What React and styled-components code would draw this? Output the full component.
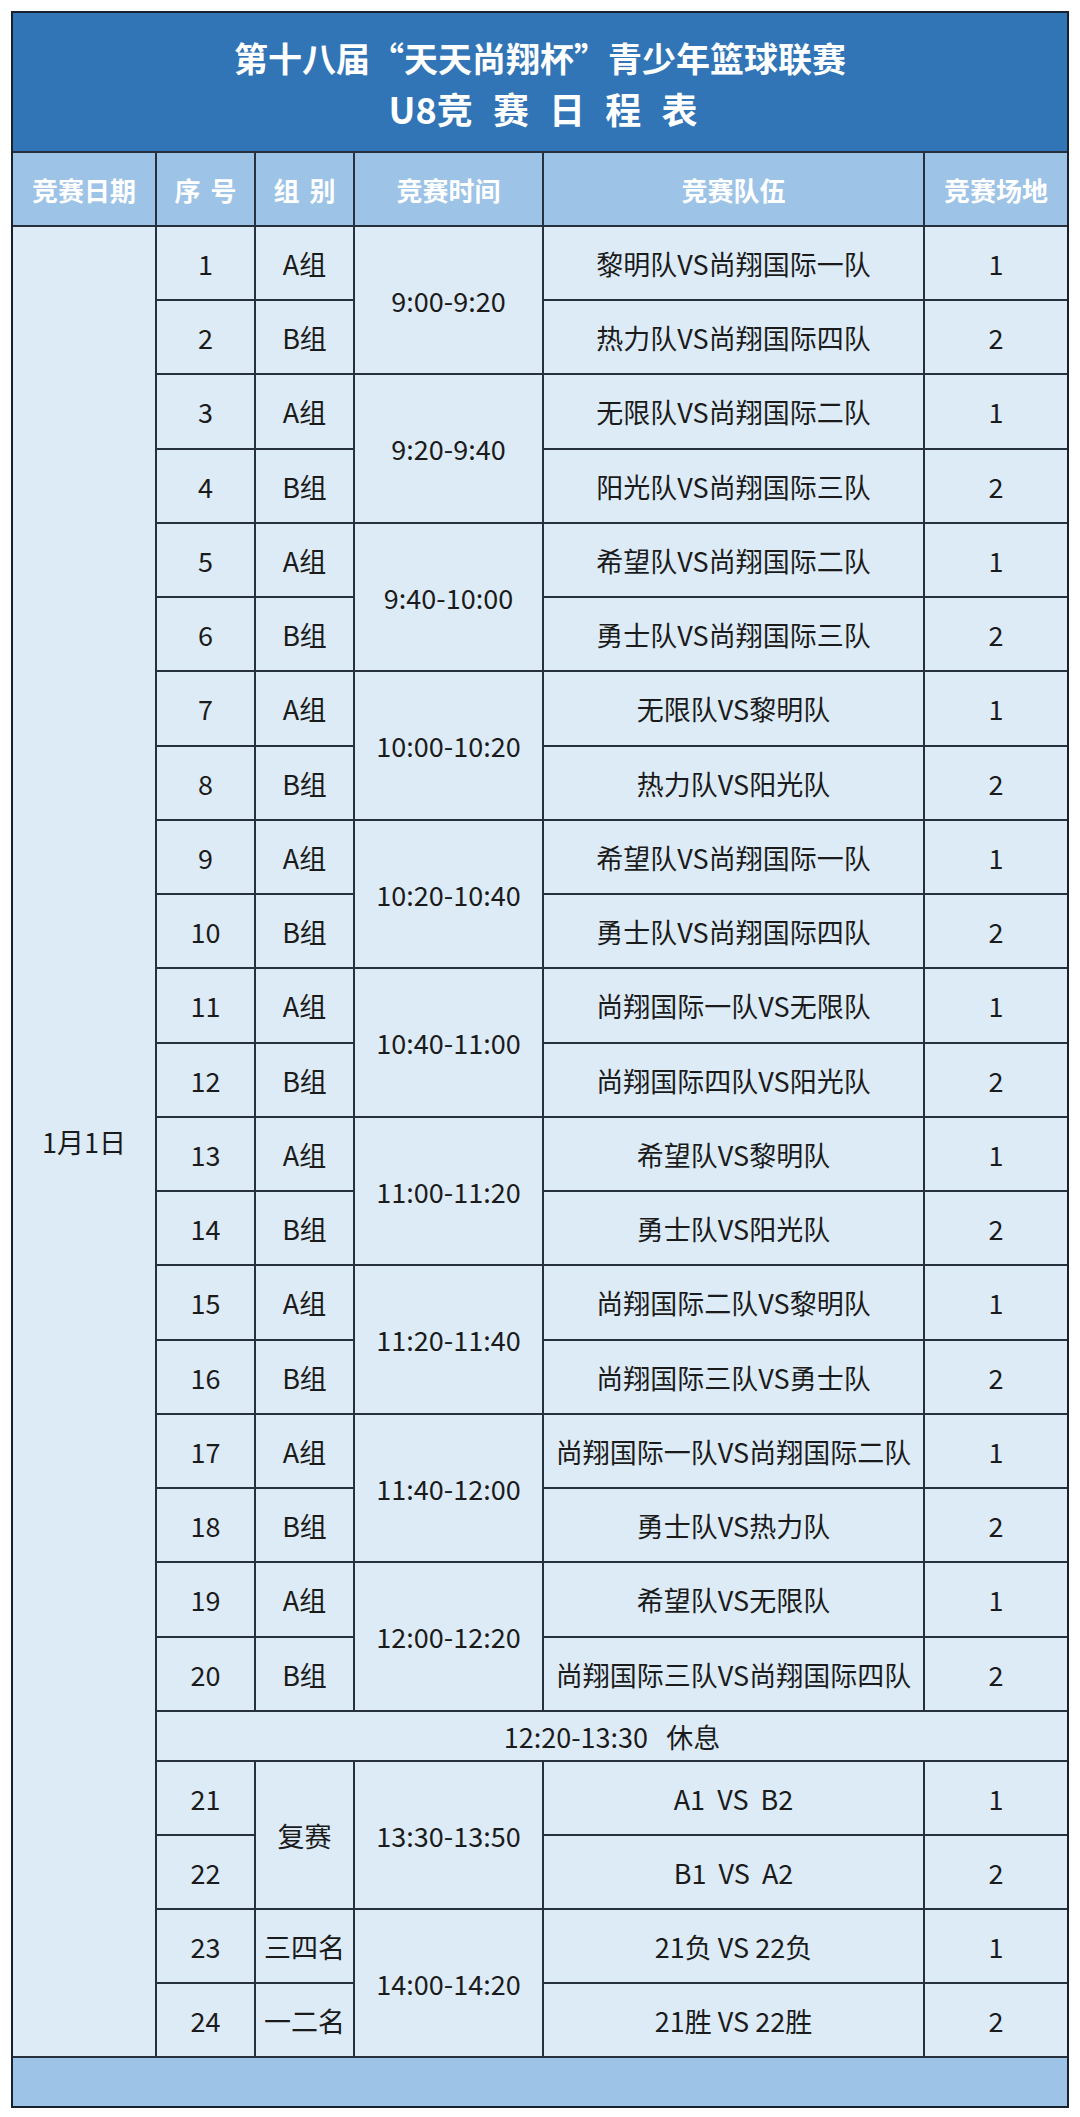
import React from "react";
import styled, { createGlobalStyle } from "styled-components";

const GlobalStyle = createGlobalStyle`
  body {
    margin: 0;
    background: #ffffff;
    font-family: "Noto Sans CJK SC", "Noto Sans", sans-serif;
  }
`;

const SPage = styled.div`
  padding: 11px 11px 11px 11px;
  width: 1080px;
  box-sizing: border-box;
`;

const STable = styled.div`
  width: 1058px;
  border: 2px solid #17222e;
  box-sizing: border-box;
  background: #26313d;
`;

const STitle = styled.div`
  height: 138px;
  background: #3175b6;
  color: #ffffff;
  display: flex;
  flex-direction: column;
  align-items: center;
  justify-content: center;
  font-weight: 700;
  font-size: 36px;
  line-height: 51px;
  padding-top: 2px;
  box-sizing: border-box;
`;

const SMain = styled.div`
  font-size: 34px;
`;

const SSub = styled.div`
  word-spacing: 12px;
  padding-left: 6px;
`;

const SGrid = styled.div`
  display: grid;
  grid-template-columns: 142px 97px 97px 187px 379px 142px;
  grid-template-rows: 72px repeat(5, 72px 72px 73px 72px) 48px repeat(4, 72px) 48px;
  gap: 2px;
  border-top: 2px solid #26313d;
`;

const SCell = styled.div`
  grid-row: ${(p) => p.$row} / span ${(p) => p.$rowSpan || 1};
  grid-column: ${(p) => p.$col} / span ${(p) => p.$colSpan || 1};
  background: #ddebf7;
  color: #1b1b1b;
  display: flex;
  align-items: center;
  justify-content: center;
  font-size: 27px;
  white-space: pre;
`;

const SHead = styled(SCell)`
  background: #9dc3e6;
  color: #ffffff;
  font-weight: 700;
  font-size: 26px;
  word-spacing: 4px;
`;

const SFoot = styled(SCell)`
  background: #9dc3e6;
`;

const matches = [
  ["黎明队VS尚翔国际一队", "1"],
  ["热力队VS尚翔国际四队", "2"],
  ["无限队VS尚翔国际二队", "1"],
  ["阳光队VS尚翔国际三队", "2"],
  ["希望队VS尚翔国际二队", "1"],
  ["勇士队VS尚翔国际三队", "2"],
  ["无限队VS黎明队", "1"],
  ["热力队VS阳光队", "2"],
  ["希望队VS尚翔国际一队", "1"],
  ["勇士队VS尚翔国际四队", "2"],
  ["尚翔国际一队VS无限队", "1"],
  ["尚翔国际四队VS阳光队", "2"],
  ["希望队VS黎明队", "1"],
  ["勇士队VS阳光队", "2"],
  ["尚翔国际二队VS黎明队", "1"],
  ["尚翔国际三队VS勇士队", "2"],
  ["尚翔国际一队VS尚翔国际二队", "1"],
  ["勇士队VS热力队", "2"],
  ["希望队VS无限队", "1"],
  ["尚翔国际三队VS尚翔国际四队", "2"],
];

const slots = [
  "9:00-9:20",
  "9:20-9:40",
  "9:40-10:00",
  "10:00-10:20",
  "10:20-10:40",
  "10:40-11:00",
  "11:00-11:20",
  "11:20-11:40",
  "11:40-12:00",
  "12:00-12:20",
];

const heads = ["竞赛日期", "序 号", "组 别", "竞赛时间", "竞赛队伍", "竞赛场地"];

export default function App() {
  return (
    <SPage>
      <GlobalStyle />
      <STable>
        <STitle>
          <SMain>第十八届“天天尚翔杯”青少年篮球联赛</SMain>
          <SSub>U8竞 赛 日 程 表</SSub>
        </STitle>
        <SGrid>
          {heads.map((h, i) => (
            <SHead key={h} $row={1} $col={i + 1}>
              {h}
            </SHead>
          ))}
          <SCell $row={2} $rowSpan={25} $col={1}>
            1月1日
          </SCell>
          {matches.map(([team, court], i) => (
            <React.Fragment key={i}>
              <SCell $row={i + 2} $col={2}>
                {i + 1}
              </SCell>
              <SCell $row={i + 2} $col={3}>
                {i % 2 === 0 ? "A组" : "B组"}
              </SCell>
              {i % 2 === 0 && (
                <SCell $row={i + 2} $rowSpan={2} $col={4}>
                  {slots[i / 2]}
                </SCell>
              )}
              <SCell $row={i + 2} $col={5}>
                {team}
              </SCell>
              <SCell $row={i + 2} $col={6}>
                {court}
              </SCell>
            </React.Fragment>
          ))}
          <SCell $row={22} $col={2} $colSpan={5}>
            12:20-13:30   休息
          </SCell>

          <SCell $row={23} $col={2}>21</SCell>
          <SCell $row={23} $rowSpan={2} $col={3}>复赛</SCell>
          <SCell $row={23} $rowSpan={2} $col={4}>13:30-13:50</SCell>
          <SCell $row={23} $col={5}>A1  VS  B2</SCell>
          <SCell $row={23} $col={6}>1</SCell>
          <SCell $row={24} $col={2}>22</SCell>
          <SCell $row={24} $col={5}>B1  VS  A2</SCell>
          <SCell $row={24} $col={6}>2</SCell>

          <SCell $row={25} $col={2}>23</SCell>
          <SCell $row={25} $col={3}>三四名</SCell>
          <SCell $row={25} $rowSpan={2} $col={4}>14:00-14:20</SCell>
          <SCell $row={25} $col={5}>21负 VS 22负</SCell>
          <SCell $row={25} $col={6}>1</SCell>
          <SCell $row={26} $col={2}>24</SCell>
          <SCell $row={26} $col={3}>一二名</SCell>
          <SCell $row={26} $col={5}>21胜 VS 22胜</SCell>
          <SCell $row={26} $col={6}>2</SCell>

          <SFoot $row={27} $col={1} $colSpan={6} />
        </SGrid>
      </STable>
    </SPage>
  );
}
